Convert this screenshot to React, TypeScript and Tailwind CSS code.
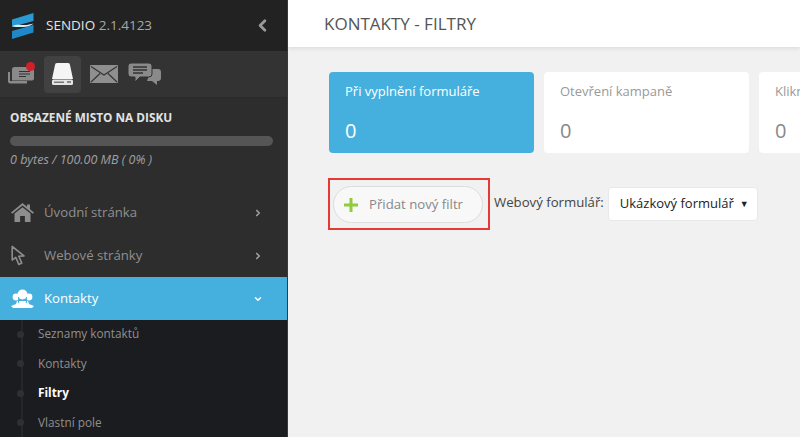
import { ChevronDown, ChevronLeft, ChevronRight } from "lucide-react";

const menu = [
  { label: "Úvodní stránka", icon: "home" },
  { label: "Webové stránky", icon: "cursor" },
];

const submenu = ["Seznamy kontaktů", "Kontakty", "Filtry", "Vlastní pole"];

function Logo() {
  return (
    <svg width="23" height="26" viewBox="0 0 23 26">
      <path d="M1 6.500 22.500 0v8L6 12.500l-5 1z" fill="#2a9ad6" />
      <path d="M22.500 12v7.500L1 26v-8l16-4.500z" fill="#1f88c9" />
      <path d="M1 13.500c5-3 11-1 14-1.500 3-.5 5-1 7.500-1.500-3 3-9 3.500-13 3.500-3 0-6 0-8.500-.5z" fill="#d6effa" />
    </svg>
  );
}

function HomeIcon() {
  return (
    <svg width="23" height="19" viewBox="0 0 23 19" fill="#8d8d8d">
      <path d="M11.500 0 0 9.500l1.200 1.300L11.500 2.600l10.300 8.200 1.200-1.300-4-3.200V1.500h-3v2.300z" />
      <path d="M11.500 4.200 3.500 10.600V19h5.600v-6h4.800v6h5.600v-8.400z" />
    </svg>
  );
}

function CursorIcon() {
  return (
    <svg width="17" height="21" viewBox="0 0 17 21" fill="none" stroke="#8d8d8d" strokeWidth="1.6">
      <path d="M1.200 1.500v13.600l3.600-2.700 3 7 3-1.300-3-6.800 5.200-.4z" strokeLinejoin="round" />
    </svg>
  );
}

function ContactsIcon() {
  return (
    <svg width="23" height="19" viewBox="0 0 23 19" fill="#ffffff">
      <circle cx="11.500" cy="5.500" r="5" />
      <circle cx="5" cy="8" r="3.400" />
      <circle cx="18" cy="8" r="3.400" />
      <path d="M6 12h11l1 3 5 2-2 2H2l-2-2 5-2z" />
      <path d="M7.600 8v6M15.400 8v6" stroke="#45b0de" strokeWidth="1" />
    </svg>
  );
}

function InboxIcon() {
  return (
    <div className="relative h-[24px] w-[27px]">
      <svg width="26" height="20" viewBox="0 0 26 20" className="absolute left-0 top-[3px]" fill="#8a8a8a">
        <path d="M0 7h2v9h17v2.500H2.500A2.500 2.500 0 0 1 0 16z" />
        <path d="M4 4.500A2.500 2.500 0 0 1 6.500 2H24a2 2 0 0 1 2 2v9.500a2 2 0 0 1-2 2H4z" />
        <path d="M11 6.500h11M11 9h11M11 11.500h7" stroke="#333" strokeWidth="1.200" />
      </svg>
      <span className="absolute right-0 top-0 h-[9px] w-[9px] rounded-full bg-[#d0202a]" />
    </div>
  );
}

function DiskIcon() {
  return (
    <svg width="21" height="22" viewBox="0 0 21 22">
      <path d="M3 2a2 2 0 0 1 2-2h11a2 2 0 0 1 2 2l3 14H0z" fill="#f5f5f5" />
      <rect x="0" y="16.500" width="21" height="5.500" rx="1.500" fill="#e4e4e4" />
      <rect x="2" y="18.500" width="10" height="1.500" fill="#777" />
      <rect x="15" y="18" width="4" height="2" fill="#888" />
    </svg>
  );
}

function MailIcon() {
  return (
    <svg width="28" height="18" viewBox="0 0 28 18">
      <rect width="28" height="18" rx="1" fill="#8f8f8f" />
      <path d="M1 1.500 14 10 27 1.500M1 17l9-8.500M27 17l-9-8.500" fill="none" stroke="#333" strokeWidth="1.100" />
    </svg>
  );
}

function ChatIcon() {
  return (
    <svg width="33" height="22" viewBox="0 0 33 22" fill="#8a8a8a">
      <path d="M23 6h7a3 3 0 0 1 3 3v6a3 3 0 0 1-3 3h-1v4l-5-4h-5z" />
      <path d="M3 0h18a3 3 0 0 1 3 3v8a3 3 0 0 1-3 3H12l-5 5v-5H3a3 3 0 0 1-3-3V3a3 3 0 0 1 3-3z" stroke="#333" strokeWidth="1" />
      <path d="M5 4h14M5 7h14M5 10h10" stroke="#333" strokeWidth="1.300" />
    </svg>
  );
}

export default function App() {
  return (
    <div className="flex h-[437px] w-[800px] overflow-hidden bg-[#f1f1f1] font-['Open_Sans',sans-serif]">
      {/* Sidebar */}
      <aside className="flex w-[288px] shrink-0 flex-col overflow-hidden border-r border-[#3a3a3a] bg-[#2d2d2d]">
        <div className="flex h-[51px] shrink-0 items-center bg-[#222222] pl-[11px] pr-[15px]">
          <Logo />
          <span className="ml-[12px] text-[13.5px] text-[#e4e4e4]">
            SENDIO <span className="text-[#a8a8a8]">2.1.4123</span>
          </span>
          <ChevronLeft className="ml-auto h-[19px] w-[19px] text-[#9a9a9a]" strokeWidth={3.5} />
        </div>

        <div className="flex h-[47px] shrink-0 items-center gap-[9px] border-b border-[#2a2a2a] bg-[#333333] pl-[8px]">
          <InboxIcon />
          <div className="flex h-[37px] w-[37px] items-center justify-center rounded bg-[#414141]">
            <DiskIcon />
          </div>
          <MailIcon />
          <div className="ml-[1px]">
            <ChatIcon />
          </div>
        </div>

        <div className="h-[80px] shrink-0 px-[10px] pt-[11px]">
          <div className="text-[11.8px] font-bold leading-[17px] text-[#e2e2e2]">OBSAZENÉ MISTO NA DISKU</div>
          <div className="mt-[10px] h-[10px] w-[263px] rounded-full bg-[#555555]" />
          <div className="mt-[6px] text-[12.5px] italic leading-[16px] text-[#a0a0a0]">0 bytes / 100.00 MB ( 0% )</div>
        </div>

        <nav className="flex min-h-0 flex-1 flex-col">
          <div className="h-[13px] shrink-0" />
          {menu.map((item) => (
            <div key={item.label} className="flex h-[43px] shrink-0 items-center pl-[11px] pr-[24px]">
              <div className="flex w-[33px] items-center">
                {item.icon === "home" ? <HomeIcon /> : <CursorIcon />}
              </div>
              <span className="text-[13.2px] text-[#8f8f8f]">{item.label}</span>
              <ChevronRight className="ml-auto h-[10px] w-[10px] text-[#a0a0a0]" strokeWidth={4} />
            </div>
          ))}
          <div className="flex h-[43px] shrink-0 items-center bg-[#45b0de] pl-[11px] pr-[24px]">
            <div className="flex w-[33px] items-center">
              <ContactsIcon />
            </div>
            <span className="text-[13.2px] text-white">Kontakty</span>
            <ChevronDown className="ml-auto h-[10px] w-[10px] text-white" strokeWidth={3.5} />
          </div>
          <div className="relative min-h-0 flex-1 bg-[#1b1c20] pl-[38px]">
            <div className="absolute bottom-0 left-[21px] top-0 w-[2px] bg-[#26272b]" />
            {submenu.map((s) => (
              <div key={s} className="relative flex h-[29.5px] items-center pb-[1px]">
                <span className="absolute left-[-21px] h-[7px] w-[7px] rounded-full bg-[#2f3034]" />
                <span className={s === "Filtry" ? "text-[11.8px] font-bold text-white" : "text-[11.8px] text-[#8f8f8f]"}>
                  {s}
                </span>
              </div>
            ))}
          </div>
        </nav>
      </aside>

      {/* Main */}
      <main className="min-w-0 flex-1">
        <header className="flex h-[47px] items-center bg-white pl-[36px] shadow-[0_2px_4px_rgba(0,0,0,0.08)]">
          <h1 className="text-[17px] font-normal text-[#555555]">KONTAKTY - FILTRY</h1>
        </header>

        <div className="flex gap-[10px] overflow-hidden pl-[41px] pt-[25px]">
          <div className="h-[81px] w-[205px] shrink-0 rounded bg-[#45b0de] pl-[16px] pt-[10px] text-white">
            <div className="text-[13px] font-medium leading-[18px]">Při vyplnění formuláře</div>
            <div className="mt-[19px] text-[20px] leading-[24px]">0</div>
          </div>
          <div className="h-[81px] w-[205px] shrink-0 rounded bg-white pl-[16px] pt-[10px] text-[#999999]">
            <div className="text-[13px] font-medium leading-[18px]">Otevření kampaně</div>
            <div className="mt-[19px] text-[20px] leading-[24px] text-[#888888]">0</div>
          </div>
          <div className="h-[81px] w-[205px] shrink-0 rounded bg-white pl-[16px] pt-[10px] text-[#999999]">
            <div className="text-[13px] font-medium leading-[18px]">Kliknutí</div>
            <div className="mt-[19px] text-[20px] leading-[24px] text-[#888888]">0</div>
          </div>
        </div>

        <div className="flex items-center pl-[40px] pt-[25px]">
          <div className="flex h-[52px] w-[162px] items-center border-2 border-[#e53935] pl-[3px]">
            <button className="flex h-[37px] w-[150px] items-center rounded-full border border-[#dddddd] bg-[#f8f8f8] pl-[9px] pt-[1px] text-[13.2px] text-[#888888]">
              <svg width="16" height="16" viewBox="0 0 16 16" className="mr-[10px]">
                <path d="M8 1v14M1 8h14" stroke="#8fcb3c" strokeWidth="3" />
              </svg>
              Přidat nový filtr
            </button>
          </div>
          <span className="ml-[4px] pb-[2px] text-[13.2px] text-[#444444]">Webový formulář:</span>
          <div className="ml-[4px] flex h-[34px] w-[150px] items-center rounded border border-[#e8e8e8] bg-white pb-[1px] pl-[11px] text-[13px] text-[#222222]">
            Ukázkový formulář
            <span className="ml-auto mr-[8px] text-[9px] text-[#222222]">▼</span>
          </div>
        </div>
      </main>
    </div>
  );
}
